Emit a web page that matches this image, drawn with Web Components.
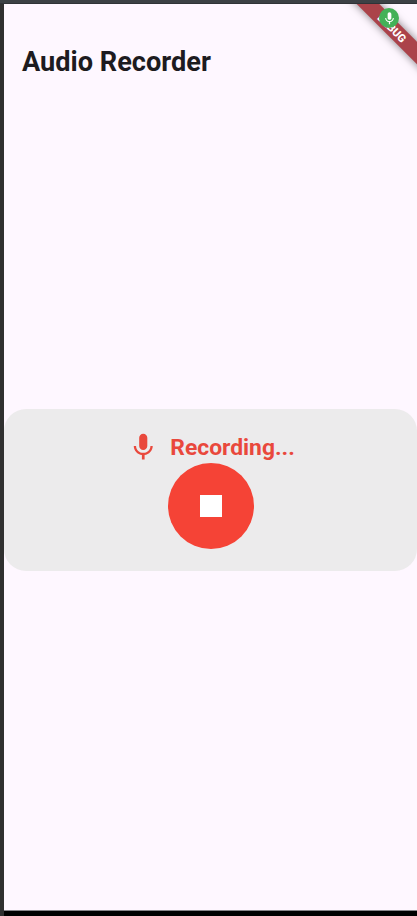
<!DOCTYPE html>
<html lang="en">
<head>
<meta charset="utf-8">
<title>Audio Recorder</title>
<style>
html, body { margin: 0; height: 100%; overflow: hidden; background: #303030; }
body { font-family: Roboto, "Liberation Sans", sans-serif; }
</style>
</head>
<body>
<recorder-screen>
  <app-title slot="bar">Audio Recorder</app-title>
  <recording-card>
    <mic-icon slot="icon"></mic-icon>
    <span slot="status">Recording...</span>
    <stop-button slot="action"></stop-button>
  </recording-card>
  <debug-banner slot="overlay">DEBUG</debug-banner>
</recorder-screen>
<script>
const define = (name, html) => {
  const template = document.createElement('template');
  template.innerHTML = html;
  customElements.define(name, class extends HTMLElement {
    constructor() {
      super();
      this.attachShadow({ mode: 'open' }).append(template.content.cloneNode(true));
    }
  });
};

define('mic-icon', `
<style>
:host { display: block; width: 32.5px; height: 32.5px; flex: none; color: inherit; }
svg { display: block; width: 100%; height: 100%; }
</style>
<svg viewBox="0 0 24 24" fill="currentColor"><path d="M12 14c1.66 0 2.99-1.34 2.99-3L15 5c0-1.66-1.34-3-3-3S9 3.34 9 5v6c0 1.66 1.34 3 3 3zm5.3-3c0 3-2.54 5.1-5.3 5.1S6.7 14 6.7 11H5c0 3.41 2.72 6.23 6 6.72V21h2v-3.28c3.28-.48 6-3.3 6-6.72h-1.7z"/></svg>`);

define('stop-button', `
<style>
:host { display: block; }
button { display: grid; place-items: center; width: 86px; height: 86px; padding: 0; border: 0; border-radius: 50%; background: #f54336; }
i { width: 22px; height: 22px; background: #fff; }
</style>
<button aria-label="Stop"><i></i></button>`);

define('app-title', `
<style>
:host { display: block; padding: 41px 18px 0; font-size: 27.15px; line-height: 34px; font-weight: 700; color: #1d1b20; white-space: nowrap; }
</style>
<slot></slot>`);

define('recording-card', `
<style>
:host { display: flex; flex-direction: column; align-items: center; box-sizing: border-box; height: 162px; padding-top: 22px; border-radius: 22px; background: #ecebec; }
.row { display: flex; align-items: center; gap: 10.8px; height: 32px; padding-left: 0.8px; color: #e9483c; font-size: 22.85px; line-height: 32px; font-weight: 700; }
.label { padding-top: 2px; }
</style>
<div class="row"><slot name="icon"></slot><div class="label"><slot name="status"></slot></div></div>
<slot name="action"></slot>`);

define('debug-banner', `
<style>
:host { display: block; position: absolute; top: 0; right: 0; width: 90px; height: 90px; overflow: hidden; }
.band { position: absolute; left: 4.75px; top: 15.75px; width: 120px; height: 16px; transform: rotate(45deg); background: #ab434a; box-shadow: 0 0 8px rgba(0,0,0,.5); color: #fff; font-size: 11px; line-height: 17px; font-weight: 800; text-align: center; }
.dot { position: absolute; left: 52px; top: 4px; width: 20px; height: 20px; border-radius: 50%; background: #43b157; color: #fff; display: grid; place-items: center; }
.dot mic-icon { width: 15px; height: 15px; }
</style>
<div class="band"><slot></slot></div>
<div class="dot"><mic-icon></mic-icon></div>`);

define('recorder-screen', `
<style>
:host { display: flex; flex-direction: column; box-sizing: border-box; height: 916px; padding-left: 4px; background: #303030; }
.top { flex: none; height: 4px; margin-left: -4px; background: linear-gradient(#3c4145 75%, #303337 75%); }
.page { position: relative; flex: none; height: 906px; background: #fef7ff; overflow: hidden; }
.bar { height: 405px; }
.foot { flex: 1; background: #000; border-top: 1px solid #88858a; }
</style>
<div class="top"></div>
<div class="page">
  <div class="bar"><slot name="bar"></slot></div>
  <slot></slot>
  <slot name="overlay"></slot>
</div>
<div class="foot"></div>`);
</script>
</body>
</html>
